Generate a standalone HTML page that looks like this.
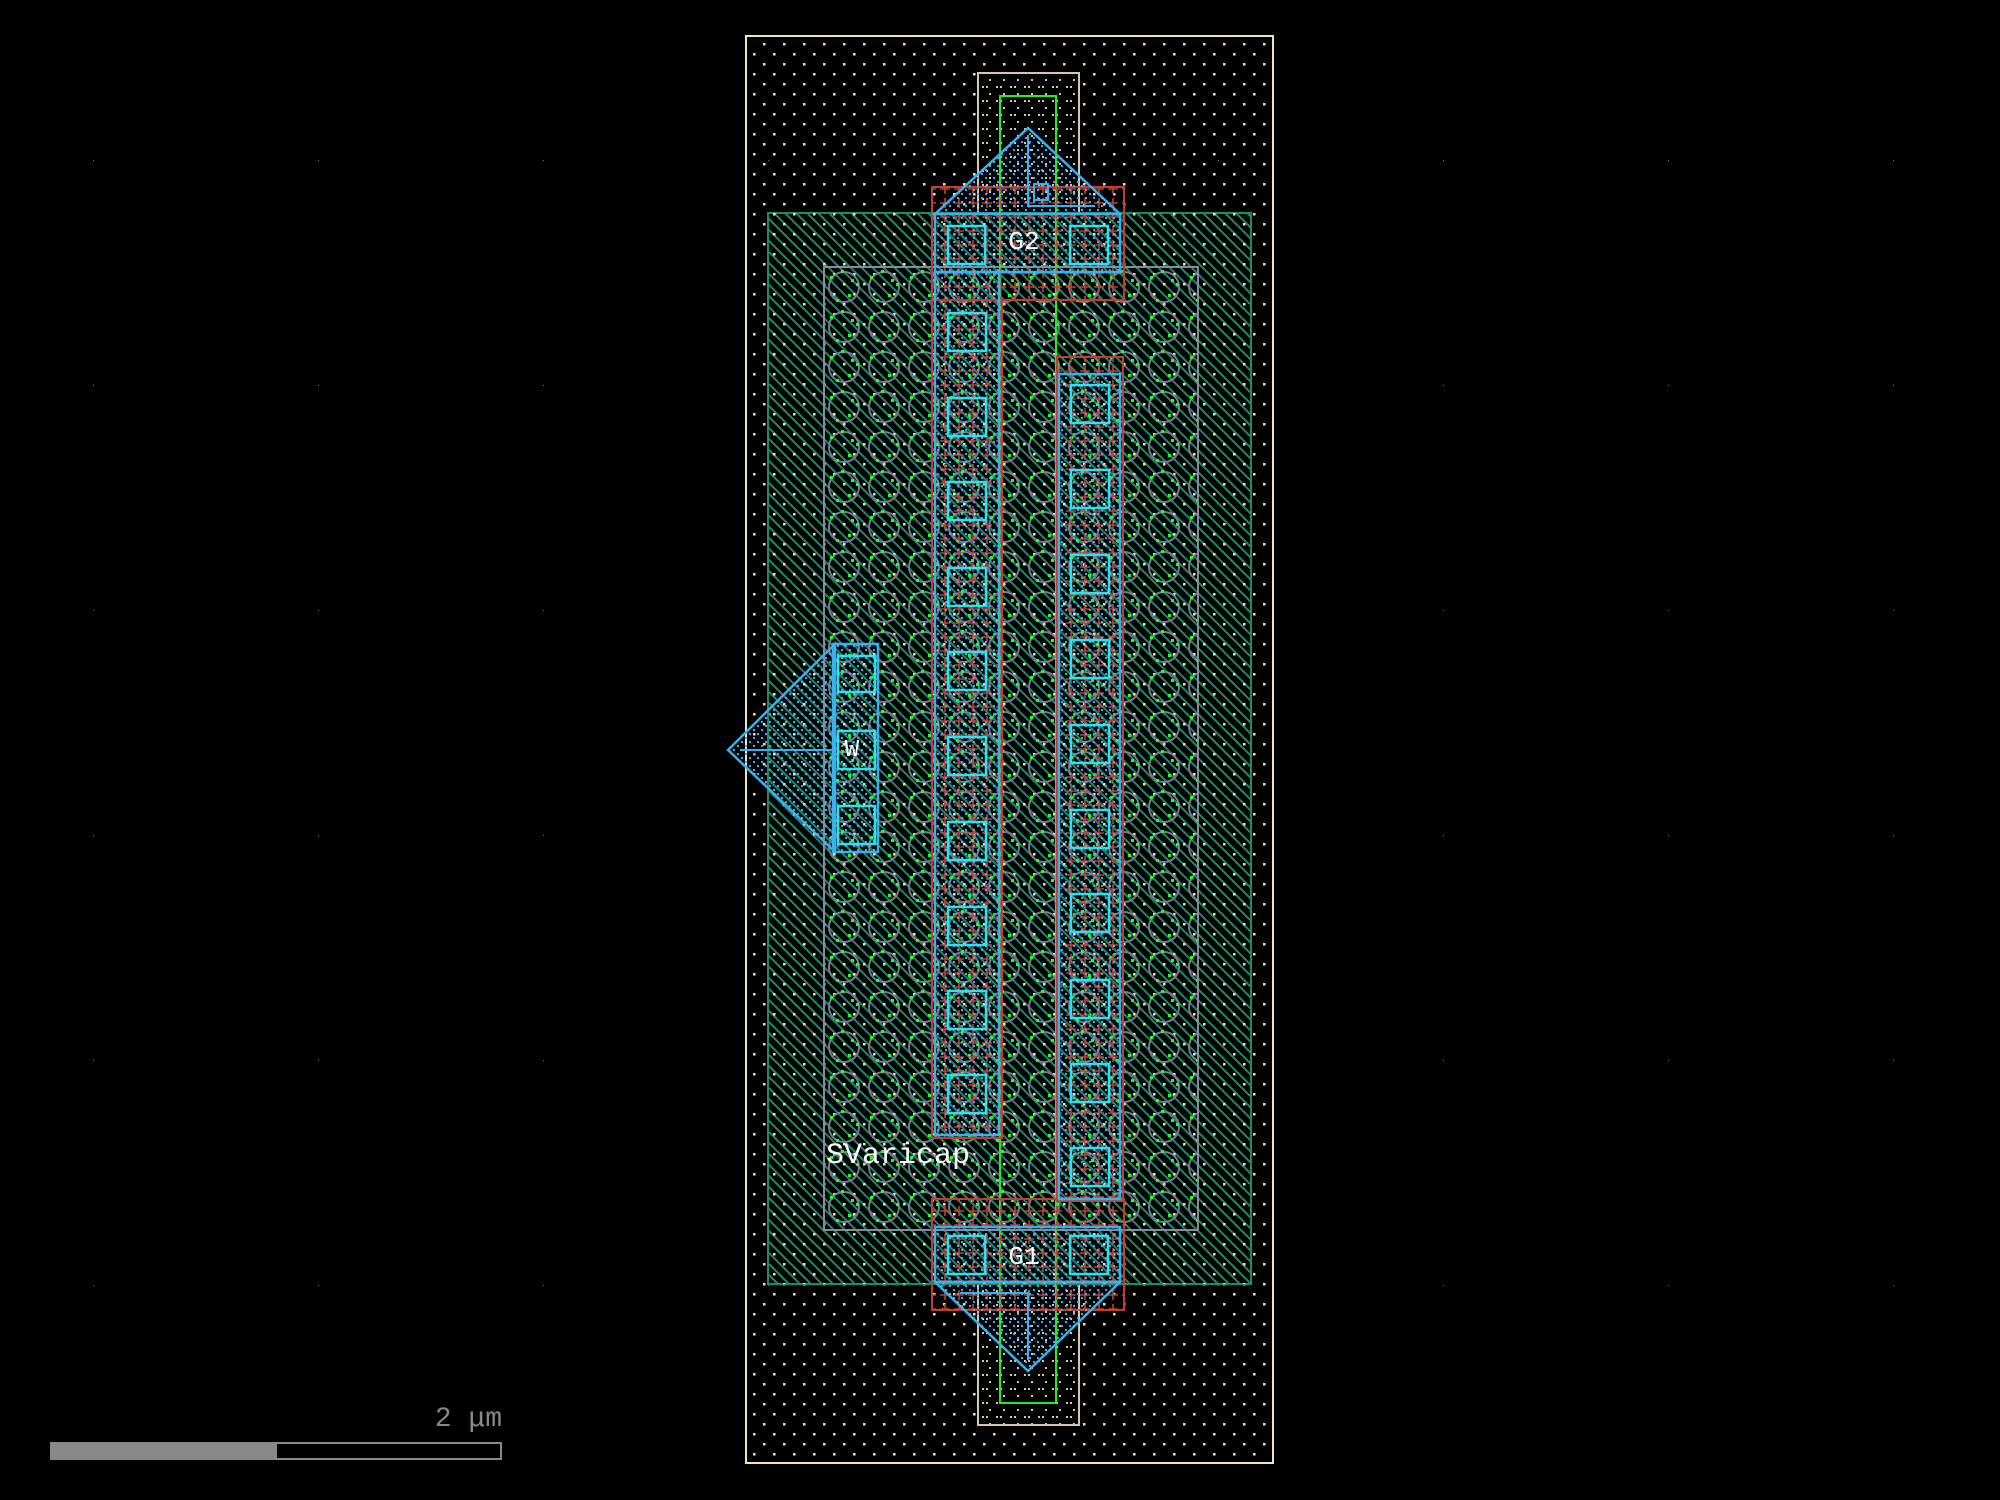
<!DOCTYPE html>
<html><head><meta charset="utf-8"><style>html,body{margin:0;padding:0;background:#000;width:2000px;height:1500px;overflow:hidden}</style></head>
<body>
<svg width="2000" height="1500" viewBox="0 0 2000 1500" xmlns="http://www.w3.org/2000/svg">
<defs>
<pattern id="dots" width="20" height="20" patternUnits="userSpaceOnUse"><rect x="3" y="3" width="2.5" height="2.5" fill="#f0e6b0"/><rect x="13" y="13" width="2.5" height="2.5" fill="#f0e6b0"/></pattern>
<pattern id="hatch" width="11" height="11" patternUnits="userSpaceOnUse"><path d="M0 0L11 11M-5.5 5.5L5.5 16.5M5.5 -5.5L16.5 5.5" stroke="#1f8a6a" stroke-width="2"/></pattern>
<pattern id="circ" width="40" height="40" patternUnits="userSpaceOnUse" x="824" y="267"><circle cx="20" cy="20" r="15" fill="none" stroke="#7a7a90" stroke-width="2"/><rect x="6" y="9" width="3" height="3" fill="#2f2"/><rect x="24" y="27" width="3" height="3" fill="#2f2"/><rect x="17" y="3" width="3" height="3" fill="#2f2"/><rect x="32" y="16" width="3" height="3" fill="#2f2"/><rect x="12" y="32" width="3" height="3" fill="#2f2"/><rect x="27" y="12" width="3" height="3" fill="#2f2"/></pattern>
<pattern id="red" width="14" height="14" patternUnits="userSpaceOnUse"><path d="M7 2V12M2 7H12" stroke="#c04030" stroke-width="1.6"/></pattern>
<pattern id="blue" width="8" height="8" patternUnits="userSpaceOnUse"><rect x="1" y="1" width="2" height="2" fill="#3ab0ee"/><rect x="5" y="5" width="2" height="2" fill="#3ab0ee"/></pattern>
<pattern id="tan" width="14" height="14" patternUnits="userSpaceOnUse"><rect x="2" y="2" width="2" height="2" fill="#d8c8a8"/><rect x="6" y="2" width="2" height="2" fill="#d8c8a8"/><rect x="9" y="9" width="2" height="2" fill="#d8c8a8"/></pattern>
<pattern id="grid" width="225" height="225" patternUnits="userSpaceOnUse" x="-131" y="-64"><rect x="224" y="224" width="2" height="2" fill="#777"/></pattern>
</defs>
<rect width="2000" height="1500" fill="url(#grid)"/>
<rect x="746" y="36" width="527" height="1427" fill="url(#dots)" stroke="#f0e6b0" stroke-width="2"/>
<rect x="978" y="73" width="101" height="1352" fill="#000" stroke="#d8c8a8" stroke-width="2"/>
<rect x="978" y="73" width="101" height="1352" fill="url(#tan)"/>
<rect x="768" y="213" width="483" height="1071" fill="#000" stroke="#1f8a6a" stroke-width="2"/>
<rect x="768" y="213" width="483" height="1071" fill="url(#hatch)"/>
<rect x="768" y="213" width="483" height="1071" fill="url(#dots)"/>
<rect x="824" y="267" width="374" height="963" fill="url(#circ)" stroke="#8a8aa0" stroke-width="2"/>
<rect x="1000" y="96" width="56" height="1307" fill="none" stroke="#2e2" stroke-width="2"/>
<rect x="932" y="187" width="192" height="113" fill="url(#red)" stroke="#c04030" stroke-width="2"/>
<rect x="932" y="1199" width="192" height="111" fill="url(#red)" stroke="#c04030" stroke-width="2"/>
<rect x="932" y="300" width="70" height="838" fill="url(#red)" stroke="#c04030" stroke-width="2"/>
<rect x="1057" y="357" width="66" height="844" fill="url(#red)" stroke="#c04030" stroke-width="2"/>
<g fill="url(#blue)" stroke="#3ab0ee" stroke-width="2.5">
<rect x="935" y="214" width="185" height="58"/>
<rect x="935" y="1227" width="185" height="55"/>
<rect x="935" y="272" width="64" height="863"/>
<rect x="1059" y="374" width="61" height="825"/>
<rect x="833" y="644" width="45" height="208"/>
<path d="M1028 128L935 214H1120Z"/>
<path d="M1028 1371L935 1282H1120Z"/>
<path d="M728 750L835 644V852Z"/>
</g>
<g stroke="#3ab0ee" stroke-width="2" fill="none">
<path d="M1028 135V206H1095"/><rect x="1034" y="184" width="14" height="16"/>
<path d="M1028 1360V1293H960"/>
<path d="M740 750H835"/>
</g>
<g fill="none" stroke="#2ee0f0" stroke-width="2.5">
<rect x="948" y="226" width="37" height="38"/><rect x="1070" y="226" width="38" height="38"/>
<rect x="948" y="1236" width="37" height="38"/><rect x="1070" y="1236" width="38" height="38"/>
<rect x="838" y="656" width="37" height="36"/><rect x="838" y="731" width="37" height="38"/><rect x="838" y="806" width="37" height="38"/>
<rect x="948" y="313" width="38" height="38"/><rect x="948" y="398" width="38" height="38"/><rect x="948" y="482" width="38" height="38"/><rect x="948" y="568" width="38" height="38"/><rect x="948" y="652" width="38" height="38"/><rect x="948" y="737" width="38" height="38"/><rect x="948" y="822" width="38" height="38"/><rect x="948" y="907" width="38" height="38"/><rect x="948" y="991" width="38" height="38"/><rect x="948" y="1075" width="38" height="38"/>
<rect x="1071" y="385" width="38" height="38"/><rect x="1071" y="470" width="38" height="38"/><rect x="1071" y="555" width="38" height="38"/><rect x="1071" y="640" width="38" height="38"/><rect x="1071" y="725" width="38" height="38"/><rect x="1071" y="810" width="38" height="38"/><rect x="1071" y="894" width="38" height="38"/><rect x="1071" y="980" width="38" height="38"/><rect x="1071" y="1064" width="38" height="38"/><rect x="1071" y="1148" width="38" height="38"/>
</g>
<g font-family="Liberation Mono, monospace" fill="#fff">
<text x="1024" y="249" font-size="26" text-anchor="middle">G2</text>
<text x="1024" y="1264" font-size="26" text-anchor="middle">G1</text>
<text x="852" y="756" font-size="24" text-anchor="middle">W</text>
<text x="826" y="1163" font-size="30">SVaricap</text>
</g>
<text x="502" y="1426" font-family="Liberation Mono, monospace" font-size="28" fill="#888" text-anchor="end">2 μm</text>
<rect x="51" y="1443" width="450" height="16" fill="none" stroke="#888" stroke-width="2"/>
<rect x="51" y="1443" width="226" height="16" fill="#888"/>
</svg>
</body></html>
